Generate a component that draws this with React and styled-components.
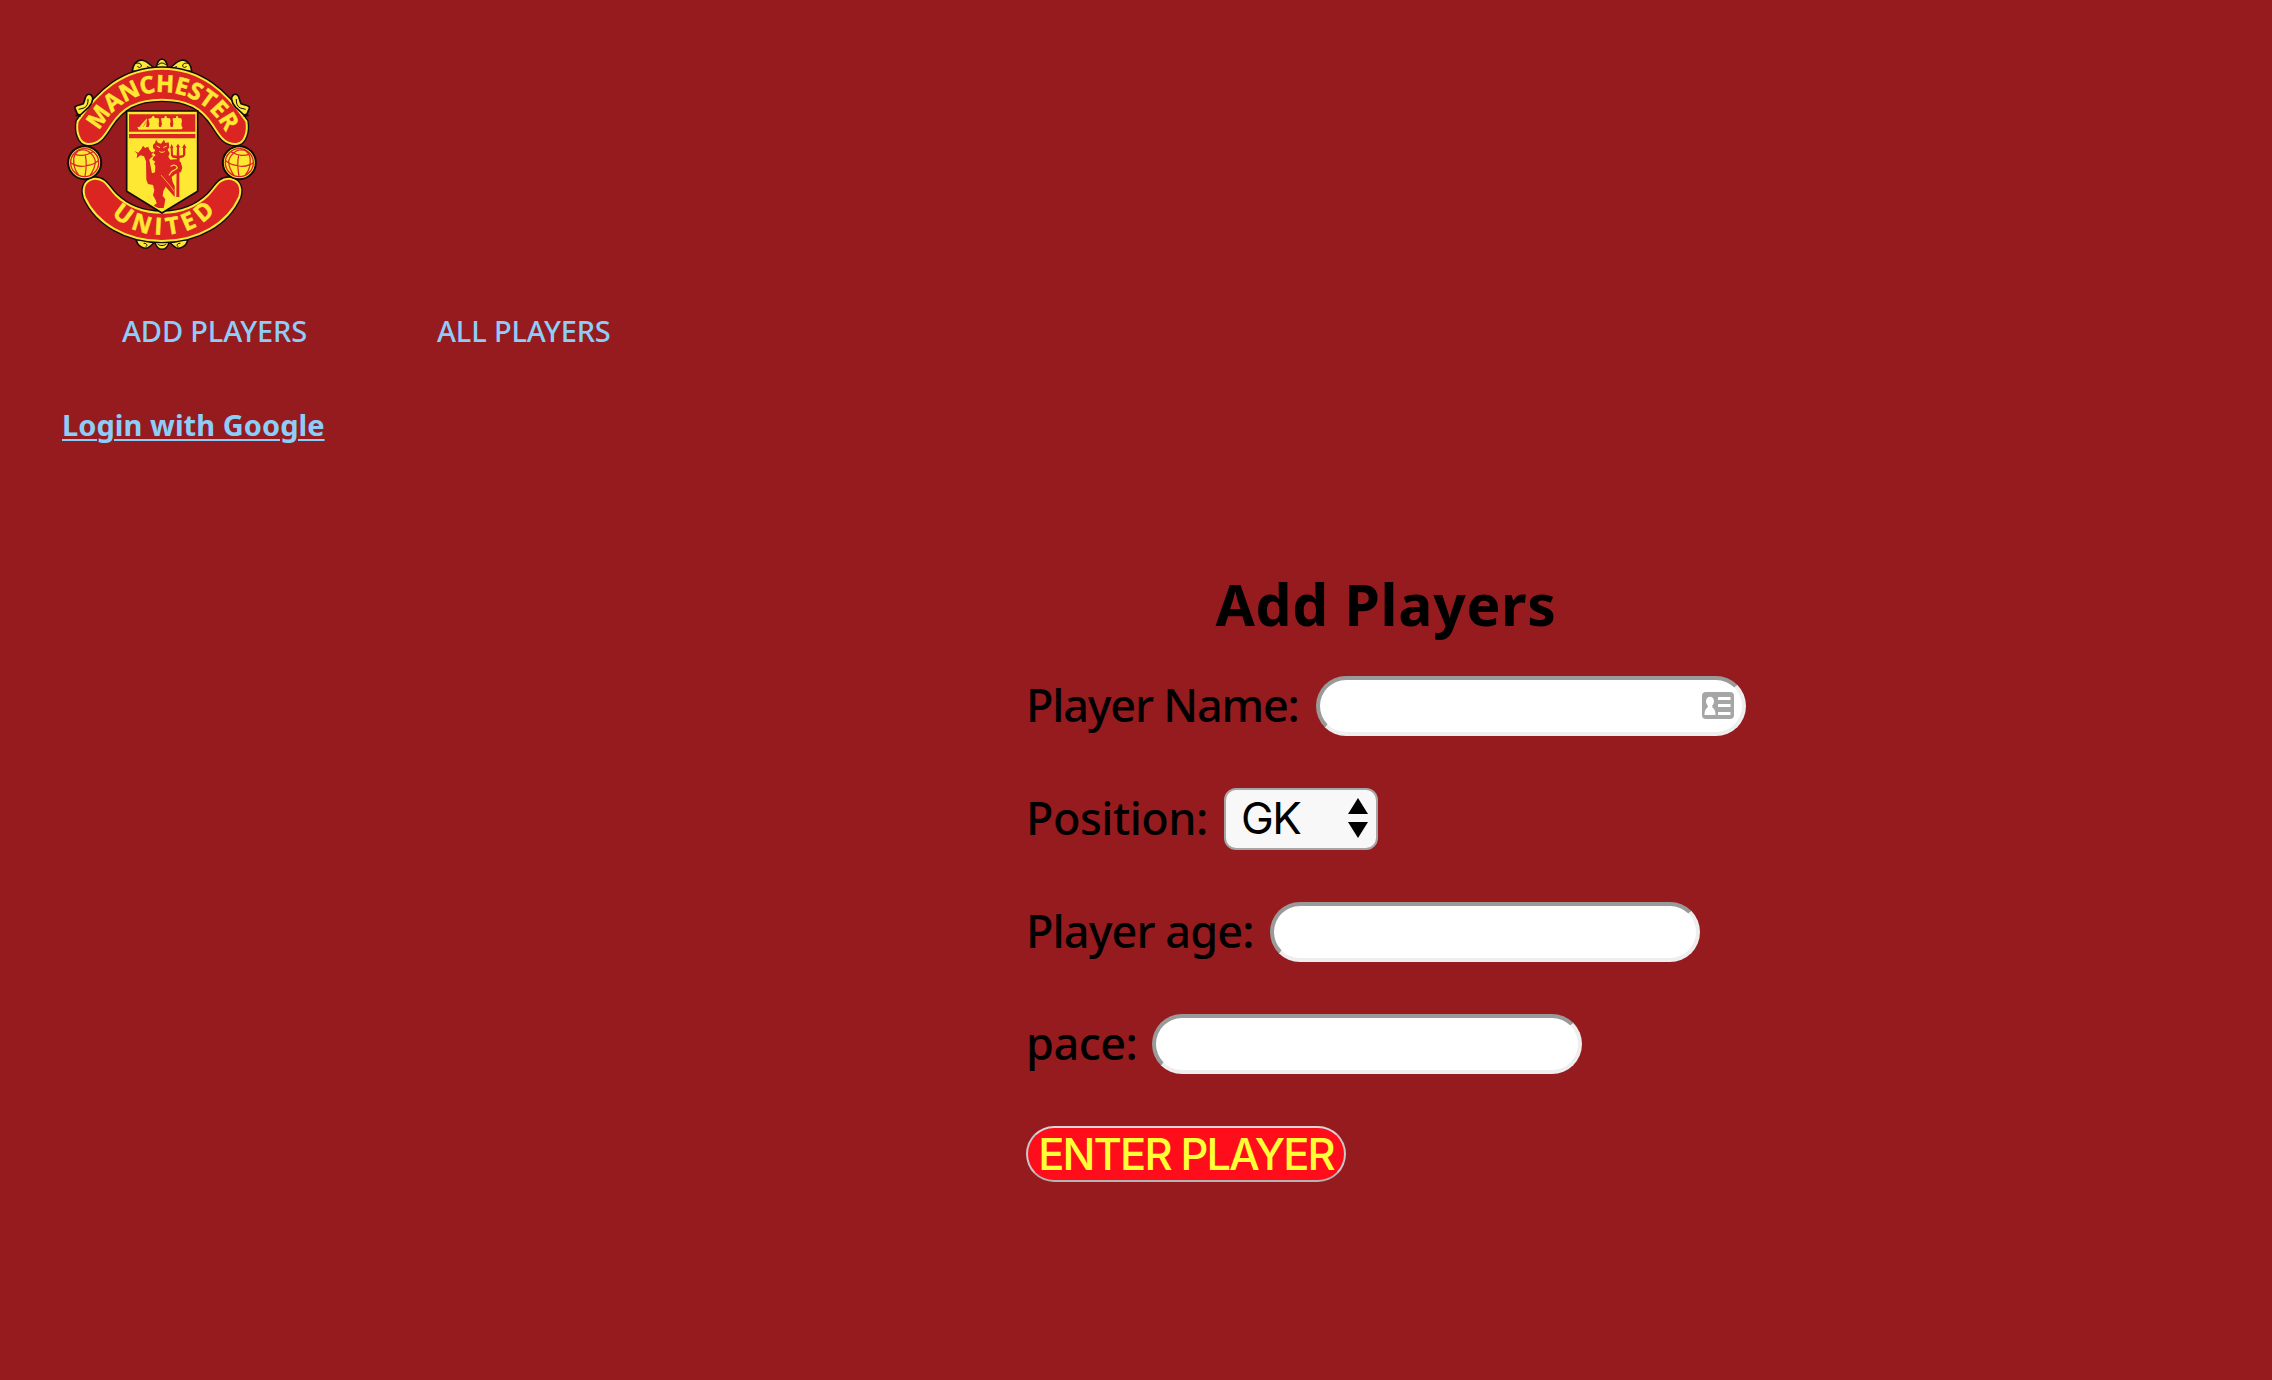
import React from "react";
import styled, { createGlobalStyle } from "styled-components";

const GlobalStyle = createGlobalStyle`
  * { box-sizing: border-box; }
  body { margin: 0; background: #961b1e; }
`;

const Page = styled.div`
  min-height: 1380px;
  background: #961b1e;
  font-family: "Noto Sans", "Open Sans", sans-serif;
  color: #000;
`;

const Header = styled.header`
  display: flex;
  flex-direction: column;
  align-items: flex-start;
  padding: 46px 56px 0;
`;

const CrestSvg = styled.svg`
  display: block;
  width: 212px;
  height: 212px;
`;

const Nav = styled.nav`
  display: flex;
  gap: 130px;
  margin-top: 53px;
  padding-left: 66px;
`;

const NavLink = styled.a`
  width: ${(p) => p.$width}px;
  font-size: 29px;
  font-weight: 500;
  line-height: 40px;
  letter-spacing: ${(p) => p.$track}px;
  white-space: nowrap;
  color: #8ccdfa;
`;

const LoginLink = styled.a`
  margin: 54px 0 0 6px;
  font-size: 29px;
  font-weight: 700;
  line-height: 40px;
  letter-spacing: ${(p) => p.$track}px;
  color: #8ccdfa;
  text-decoration: underline;
  text-decoration-thickness: 2px;
  text-underline-offset: 3px;
`;

const Form = styled.form`
  display: flex;
  flex-direction: column;
  align-items: flex-start;
  width: 720px;
  margin: 119px 0 0 1026px;
`;

const Title = styled.h1`
  align-self: center;
  margin: 0 0 32px;
  font-size: 57px;
  font-weight: 700;
  line-height: 80px;
  letter-spacing: ${(p) => p.$track}px;
`;

const Row = styled.div`
  display: flex;
  align-items: center;
  height: ${(p) => p.$height || 60}px;
  margin-bottom: ${(p) => p.$after || 52}px;
`;

const Label = styled.label`
  width: ${(p) => p.$width}px;
  padding-bottom: 2px;
  font-size: 45px;
  font-weight: 500;
  line-height: 58px;
  letter-spacing: ${(p) => p.$track}px;
  white-space: nowrap;
`;

const Field = styled.div`
  display: flex;
  align-items: center;
  justify-content: flex-end;
  width: 430px;
  height: 60px;
  padding-right: 8px;
  border: 4px solid;
  border-color: #9a9a9a #eeeeee #eeeeee #9a9a9a;
  border-radius: 30px;
  background: #fff;
`;

const Select = styled.div`
  display: flex;
  align-items: center;
  justify-content: space-between;
  width: 154px;
  height: 62px;
  padding: 0 8px 2px 15px;
  border: 2px solid #a6a6a6;
  border-radius: 12px;
  background: #f8f8f8;
  font-family: Inter, "Liberation Sans", sans-serif;
  font-size: 44px;
  letter-spacing: -1.6px;
`;

const Submit = styled.button`
  display: flex;
  align-items: center;
  justify-content: center;
  width: 320px;
  height: 56px;
  padding: 0;
  border: 2px solid;
  border-color: #d8d8d8 #c8c8c8 #b4b4b4;
  border-radius: 28px;
  background: #ff0d1b;
  color: #ffff38;
  font-family: Inter, "Liberation Sans", sans-serif;
  font-size: 43.5px;
  font-weight: 500;
  line-height: 52px;
  letter-spacing: ${(p) => p.$track}px;
  white-space: nowrap;
`;

const Y = "#ffe833";
const R = "#da2522";
const K = "#100c0c";

const TOP_BAND =
  "M318 68 C436 68 510 138 571 226 C576 254 568 292 541 294 C504 296 491 268 470 237 C437 188 398 161 318 161 C238 161 199 188 166 237 C145 268 132 296 95 294 C68 292 60 254 65 226 C126 138 200 68 318 68 Z";
const BOTTOM_BAND =
  "M318 585 C210 585 121 532 86 453 C77 421 91 400 117 398 C147 397 156 423 178 446 C214 481 264 500 318 500 C372 500 422 481 458 446 C480 423 489 397 519 398 C545 400 559 421 550 453 C515 532 426 585 318 585 Z";

function Band({ d }) {
  return (
    <g strokeLinejoin="round">
      <path d={d} fill={K} stroke={K} strokeWidth="14" />
      <path d={d} fill={R} stroke={Y} strokeWidth="6" />
    </g>
  );
}

function Ball({ flip }) {
  return (
    <g transform={flip ? "translate(636 0) scale(-1 1)" : undefined}>
      <circle cx="86" cy="350" r="49.5" fill={Y} stroke={K} strokeWidth="6" />
      <g fill="none" stroke={R} strokeWidth="3.6">
        <circle cx="86" cy="350" r="42" strokeWidth="4" />
        <path d="M57 325 C70 330 92 329 103 321 L112 317" />
        <path d="M57 325 L66 315 C76 309 94 311 103 321" />
        <path d="M57 325 C53 334 52 347 54 356 L44 350" />
        <path d="M54 356 C66 361 78 363 89 360" />
        <path d="M54 356 C56 370 62 380 68 386" />
        <path d="M88 328 C92 345 92 362 87 391" />
        <path d="M90 359 C103 358 116 353 127 344" />
        <path d="M103 321 C114 331 118 340 118 349 C116 367 108 380 102 388" />
      </g>
    </g>
  );
}

function SideScroll({ flip }) {
  return (
    <g transform={flip ? "translate(637 0) scale(-1 1)" : undefined}>
      <path
        d="M57 187 C55 181 62 179 70 177 L82 173 C87 165 86 151 94 146 C103 142 112 150 110 160 C109 169 104 178 98 184 L76 204 C71 209 63 205 62 199 Z"
        fill={Y} stroke={K} strokeWidth="5" strokeLinejoin="round"
      />
      <path d="M68 190 L84 186 C93 182 97 172 96 159" fill="none" stroke={K} strokeWidth="3" />
      <path d="M59 208 L74 210" stroke={K} strokeWidth="5" />
    </g>
  );
}

function Ornaments() {
  return (
    <g fill={Y} stroke={K} strokeWidth="4.5" strokeLinejoin="round">
      <path d="M229 76 C230 58 240 43 256 42 C271 43 278 53 291 64 L291 75 Z" />
      <path d="M407 76 C406 58 396 43 380 42 C365 43 358 53 345 64 L345 75 Z" />
      <path d="M300 68 C304 56 303 41 318 39 C333 41 332 56 336 68 Z" />
      <path d="M240 582 C246 602 263 610 276 605 C284 601 290 594 296 588 L296 580 Z" />
      <path d="M396 582 C390 602 373 610 360 605 C352 601 346 594 340 588 L340 580 Z" />
      <path d="M296 587 C300 601 309 610 318 610 C327 610 336 601 340 587 Z" />
      <g fill="none" strokeWidth="3">
        <path d="M236 54 C244 48 257 52 256 60 C254 66 246 66 245 60" />
        <path d="M400 54 C392 48 379 52 380 60 C382 66 390 66 391 60" />
        <path d="M273 62 L288 66 M363 62 L348 66" />
        <path d="M307 57 C311 49 325 49 329 57" />
        <path d="M263 592 C272 590 276 600 269 602 M373 592 C364 590 360 600 367 602" />
        <path d="M305 594 C312 600 324 600 331 594" />
      </g>
    </g>
  );
}

function Ship() {
  return (
    <g fill={Y}>
      <path d="M246 248 L259 232 L273 217 L270 248 Z" />
      <path d="M277 219 L286 216 L290 210 L294 210 L296 216 L308 217 L309 225 L308 234 L309 243 L278 243 L281 234 Z" />
      <path d="M315 217 L325 216 L327 210 L331 210 L333 216 L342 217 L344 225 L342 234 L344 243 L315 243 L318 234 Z" />
      <path d="M350 217 L360 216 L361 210 L365 210 L367 216 L376 217 L378 225 L376 234 L378 243 L350 243 L352 234 Z" />
      <path d="M244 243 L380 243 L378 250 L248 251 Z" />
      <path d="M262 242 L271 226" stroke={R} strokeWidth="1.5" />
    </g>
  );
}

function Devil() {
  return (
    <g fill={R}>
      <path d="M235 315 L247 320 L256 309 L261 299 L267 306 L277 302 L279 310 L286 319 L293 318 L286 327 L292 329 L284 337 L280 341 L288 382 L297 379 L298 360 L294 353 L298 347 L289 341 L292 333 L299 328 L292 321 L298 313 L291 306 L291 297 L297 291 L300 281 L306 290 L315 293 L324 281 L328 291 L338 289 L340 304 L335 311 L341 322 L337 333 L343 341 L359 340 L374 348 L379 365 L375 378 L358 384 L347 393 L350 408 L356 420 L356 453 L342 437 L329 422 L322 436 L320 449 L328 460 L326 472 L323 486 L307 486 L293 479 L302 472 L299 462 L291 448 L295 433 L291 417 L276 414 L271 401 L270 346 L264 331 L253 328 L242 337 L244 323 Z" />
      <path d="M362 338 H370 V453 H361 Z" />
      <path d="M342 305 L347 294 L352 305 L350 306 L351 327 L362 329 L363 304 L360 303 L366 293 L372 303 L369 305 L370 329 L381 327 L381 306 L378 305 L385 294 L391 305 L388 307 L388 327 L383 334 L371 337 L370 345 L362 345 L362 337 L350 335 L345 329 L344 307 Z" />
      <path d="M344 362 C352 354 362 357 364 366 C358 374 348 372 344 381 L339 388" fill="none" stroke={Y} strokeWidth="3.5" />
      <path d="M302 300 L312 305 M332 300 L322 305 M310 316 C314 320 322 320 326 316" stroke={Y} strokeWidth="3" fill="none" />
      <path d="M315 387 L344 421 L354 436" stroke={Y} strokeWidth="2" fill="none" />
    </g>
  );
}

function Crest() {
  return (
    <CrestSvg viewBox="0 0 636 636" role="img">
      <defs>
        <path id="arcTop" d="M108 348 A210 210 0 0 1 528 348" />
        <path id="arcBottom" d="M98 347 A220 220 0 0 0 538 347" />
      </defs>
      <Ornaments />
      <Band d={TOP_BAND} />
      <Band d={BOTTOM_BAND} />
      <SideScroll />
      <SideScroll flip />
      <Ball />
      <Ball flip />
      <path d="M212 195 H425 V436 L318 501 L212 436 Z" fill={Y} stroke={K} strokeWidth="5" />
      <path d="M219 205 H418 V257 H219 Z M219 264 H418 V277 H219 Z" fill={R} />
      <Ship />
      <Devil />
      <g fill={Y} stroke={Y} strokeWidth="1.5" fontFamily="'Open Sans', 'Noto Sans', sans-serif" fontWeight="700" fontSize="71" textAnchor="middle">
        <text textLength="472"><textPath href="#arcTop" startOffset="50.3%" textLength="472">MANCHESTER</textPath></text>
        <text textLength="346"><textPath href="#arcBottom" startOffset="50.9%" textLength="346">UNITED</textPath></text>
      </g>
    </CrestSvg>
  );
}

function ContactIcon() {
  return (
    <svg width="32" height="28" viewBox="0 0 32 28">
      <rect width="32" height="27" rx="4" fill="#a6a6a6" />
      <ellipse cx="8" cy="9.5" rx="4" ry="4.8" fill="#fff" />
      <path d="M6 13 H10 L10.5 15.5 C13 17 13.5 20 13.5 23 H2.5 C2.5 20 3 17 5.5 15.5 Z" fill="#fff" />
      <path d="M16 6.5 H28.5 M16 13.5 H28.5 M16 21.5 H28.5" stroke="#fff" strokeWidth="3" />
    </svg>
  );
}

function Arrows() {
  return (
    <svg width="20" height="40" viewBox="0 0 20 40">
      <path d="M10 0 L20 16 H0 Z M0 24 H20 L10 40 Z" fill="#000" />
    </svg>
  );
}

export default function App() {
  return (
    <Page>
      <GlobalStyle />
      <Header>
        <Crest />
        <Nav>
          <NavLink $width={185} $track={-0.15}>ADD PLAYERS</NavLink>
          <NavLink $width={174} $track={-0.15}>ALL PLAYERS</NavLink>
        </Nav>
        <LoginLink $track={0.05}>Login with Google</LoginLink>
      </Header>
      <Form>
        <Title $track={0.7}>Add Players</Title>
        <Row>
          <Label $width={290} $track={-1.2}>Player Name:</Label>
          <Field><ContactIcon /></Field>
        </Row>
        <Row $height={62}>
          <Label $width={198} $track={-0.5}>Position:</Label>
          <Select>GK<Arrows /></Select>
        </Row>
        <Row>
          <Label $width={244} $track={-0.9}>Player age:</Label>
          <Field />
        </Row>
        <Row>
          <Label $width={126} $track={-0.5}>pace:</Label>
          <Field />
        </Row>
        <Submit type="button" $track={-1.9}>ENTER PLAYER</Submit>
      </Form>
    </Page>
  );
}
